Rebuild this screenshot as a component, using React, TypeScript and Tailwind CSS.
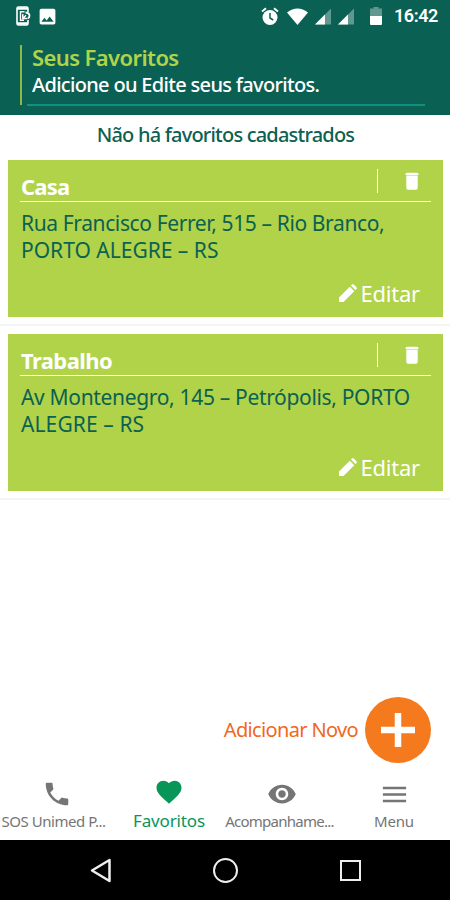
import { MdFavorite, MdImage, MdMenu, MdPhone, MdRemoveRedEye } from "react-icons/md";

const favorites = [
  {
    name: "Casa",
    nameClass: "tracking-[-0.8px]",
    lines: [
      { text: "Rua Francisco Ferrer, 515 – Rio Branco,", className: "tracking-[-0.38px]" },
      { text: "PORTO ALEGRE – RS", className: "tracking-[0px]" },
    ],
  },
  {
    name: "Trabalho",
    nameClass: "tracking-[-0.6px]",
    lines: [
      { text: "Av Montenegro, 145 – Petrópolis, PORTO", className: "tracking-[-0.33px]" },
      { text: "ALEGRE – RS", className: "tracking-[0.1px]" },
    ],
  },
];

function SignalIcon() {
  return (
    <svg width="17" height="17" viewBox="0 0 17 17">
      <path d="M0 16.5 16 .5v16z" fill="#fff" opacity=".35" />
      <path d="M0 16.5 10 6.5v10z" fill="#fff" />
    </svg>
  );
}

function AlarmIcon() {
  return (
    <svg width="18" height="19" viewBox="0 0 18 19" fill="none">
      <circle cx="9" cy="10.500" r="7.500" fill="#fff" />
      <path d="M1 4.500 5 1.200M17 4.500 13 1.200" stroke="#fff" strokeWidth="1.800" />
      <path d="M9 6v5l3.200 2" stroke="#0b6054" strokeWidth="1.500" />
    </svg>
  );
}

function StatusBar() {
  return (
    <div className="flex h-8 items-center pl-4 pr-3 text-white">
      <svg width="15" height="20" viewBox="0 0 15 20" fill="none" stroke="currentColor">
        <path d="M12 6V2.5Q12 1 10.500 1h-8Q1 1 1 2.500v15Q1 19 2.500 19h8q1.500 0 1.500-1.500V14" strokeWidth="1.600" />
        <path d="M1 2.500h11M1 17.500h11" strokeWidth="2.500" />
        <path d="M8.500 5.800H4.500v8.500H8M6.800 8v4.500h4.500M7 12.200l3-3" strokeWidth="1.400" />
        <path d="M9.500 6.500q4 .3 4 3.200 0 1.800-1.700 2.800" strokeWidth="1.800" />
      </svg>
      <MdImage size={21} className="ml-1.5" />
      <div className="ml-auto flex items-center">
        <AlarmIcon />
        <svg className="ml-2" width="21" height="17" viewBox="0 0 21 17">
          <path d="M0 4.500Q10.500-3.500 21 4.500L10.500 17z" fill="#fff" />
        </svg>
        <span className="ml-[7px] flex gap-1.5">
          <SignalIcon />
          <SignalIcon />
        </span>
        <svg className="ml-[15px]" width="12" height="18" viewBox="0 0 12 18" fill="#fff">
          <path d="M3.500 0h5v1.500H12V9H0V1.500h3.500z" opacity=".35" />
          <path d="M0 9h12v8q0 1-1 1H1q-1 0-1-1z" />
        </svg>
        <span className="ml-3 font-[Roboto] text-[18px] font-semibold leading-8 tracking-[-0.4px]">16:42</span>
      </div>
    </div>
  );
}

function FavoriteCard({ item }: { item: (typeof favorites)[number] }) {
  return (
    <div className="h-[174px] border-b-2 border-[#f3f4f5] px-2 pt-2">
      <div className="mr-[-1px] flex h-[157px] flex-col bg-[#b0d349] pl-3 pr-3">
        <div className="flex h-[42px] shrink-0 items-start border-b border-white text-white">
          <span className={`pl-px pt-[13px] text-[22px] font-bold leading-[26px] ${item.nameClass}`}>{item.name}</span>
          <span className="ml-auto mt-[9px] h-[24px] w-px bg-white" />
          <svg className="ml-[27px] mr-[12px] mt-[12px]" width="14" height="18" viewBox="0 0 14 18" fill="currentColor">
            <path d="M.5 1.500 2 .8h10l1.500.7v1.600H.5zM1.300 3.600h11.400V16q0 1.700-1.700 1.700H3Q1.300 17.700 1.300 16z" />
          </svg>
        </div>
        <div className="pl-px pt-2 text-[21px] leading-[27px] text-[#0b6152]">
          {item.lines.map((line) => (
            <p key={line.text} className={`whitespace-nowrap ${line.className}`}>{line.text}</p>
          ))}
        </div>
        <button className="ml-auto mr-[11px] mt-[14px] flex items-center gap-[3px] text-[22px] leading-[30px] tracking-[-0.2px] text-white">
          <svg width="18" height="18" viewBox="0 0 18 18" fill="currentColor">
            <path d="M0 18v-4.500L10.800 2.700l4.500 4.500L4.500 18zM11.900 1.600 13 .5q.9-.9 1.800 0l2.700 2.700q.9.900 0 1.800l-1.100 1.100z" />
          </svg>
          Editar
        </button>
      </div>
    </div>
  );
}

export default function App() {
  return (
    <div className="flex h-[900px] w-[450px] flex-col overflow-hidden bg-white font-['Noto_Sans',sans-serif]">
      <header className="h-[115px] shrink-0 bg-[#0b6054]">
        <StatusBar />
        <div className="ml-5 mr-[25px] mt-[13px] flex h-[61px]">
          <div className="h-[60px] w-[2px] bg-[#8fb847]" />
          <div className="ml-[5px] flex-1 border-b-2 border-[#129080] pl-[5px]">
            <h1 className="mt-[-1px] text-[22px] font-semibold leading-[26px] tracking-[-0.6px] text-[#b0d349]">Seus Favoritos</h1>
            <p className="whitespace-nowrap pt-px text-[20px] font-medium leading-[28px] tracking-[-0.68px] text-white">Adicione ou Edite seus favoritos.</p>
          </div>
        </div>
      </header>

      <main className="relative min-h-0 flex-1">
        <p className="h-[37px] pl-px pt-[6px] text-center text-[20px] font-medium leading-[28px] tracking-[-0.8px] text-[#0b6152]">
          Não há favoritos cadastrados
        </p>
        {favorites.map((item) => (
          <FavoriteCard key={item.name} item={item} />
        ))}
        <div className="absolute bottom-1 right-[19px] flex items-center gap-[7px]">
          <span className="text-[20px] tracking-[-0.65px] text-[#f0681c]">Adicionar Novo</span>
          <button className="flex size-[66px] items-center justify-center rounded-full bg-[#f5791d]">
            <svg width="34" height="34" viewBox="0 0 34 34" fill="none" stroke="#fff" strokeWidth="6.500">
              <path d="M17 0v34M0 17h34" />
            </svg>
          </button>
        </div>
      </main>

      <nav className="flex h-[73px] shrink-0 text-[15px] text-[#757575]">
        <div className="flex w-[113px] flex-col items-center pt-3">
          <MdPhone size={30} />
          <span className="-ml-1.5 mt-[2px] whitespace-nowrap leading-5 tracking-[-0.45px]">SOS Unimed P...</span>
        </div>
        <div className="flex w-[112px] flex-col items-center pt-[10px] text-[#079558]">
          <MdFavorite size={30} />
          <span className="mt-[2px] text-[17px] leading-6 tracking-[-0.15px]">Favoritos</span>
        </div>
        <div className="flex w-[113px] flex-col items-center pt-3">
          <MdRemoveRedEye size={30} />
          <span className="-ml-1 mt-[2px] whitespace-nowrap leading-5 tracking-[-0.75px]">Acompanhame...</span>
        </div>
        <div className="flex w-[112px] flex-col items-center pt-3">
          <MdMenu size={31} />
          <span className="mt-px leading-5 tracking-[-0.15px]">Menu</span>
        </div>
      </nav>

      <div className="flex h-[60px] shrink-0 items-center bg-black pl-[90px] text-[#eee]">
        <svg width="21" height="25" viewBox="0 0 21 25" fill="none" stroke="currentColor" strokeWidth="2.500">
          <path d="M19.500 2v21L2 12.500z" strokeLinejoin="round" />
        </svg>
        <div className="ml-[102px] size-[25px] rounded-full border-[2.500px] border-current" />
        <div className="ml-[102px] size-[21px] border-[2.500px] border-current" />
      </div>
    </div>
  );
}
